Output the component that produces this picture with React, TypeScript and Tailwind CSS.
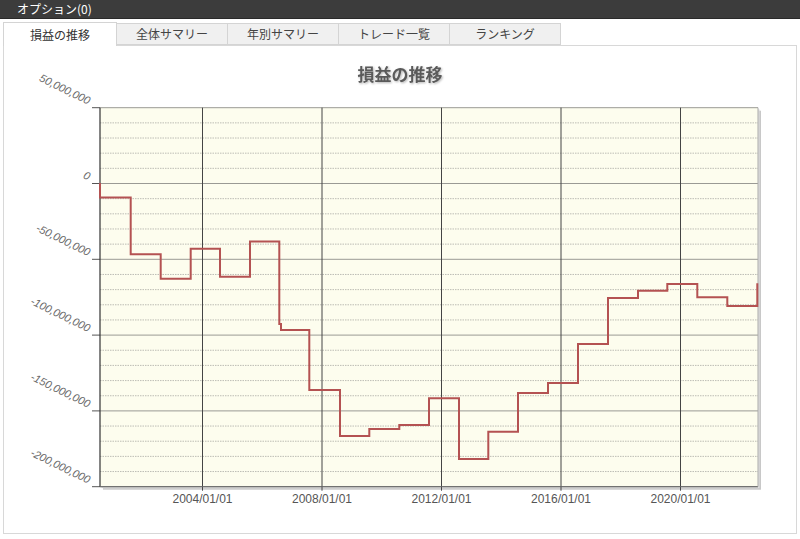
import React from "react";

const pts: [number, number][] = [
  [100, 183], [100, 197.5], [130.7, 197.5], [130.7, 254.3], [160.7, 254.3], [160.7, 278.7],
  [190.7, 278.7], [190.7, 248.7], [220, 248.7], [220, 276.7], [250, 276.7], [250, 241.5],
  [279.3, 241.5], [279.3, 324], [281, 324], [281, 330], [309.3, 330], [309.3, 390], [340, 390],
  [340, 436], [369.3, 436], [369.3, 429], [399.3, 429], [399.3, 425], [429, 425], [429, 398.3],
  [459, 398.3], [459, 459], [488.3, 459], [488.3, 431.7], [518, 431.7], [518, 393], [548, 393],
  [548, 383], [578, 383], [578, 344], [608, 344], [608, 298], [638, 298], [638, 290.7],
  [667.3, 290.7], [667.3, 284], [697.3, 284], [697.3, 297.3], [727.3, 297.3], [727.3, 306],
  [757.3, 306], [757.3, 283.3],
];

const L = 100;
const R = 758;
const T = 107.7;
const B = 486.7;
const major = 75.8;

function Chart() {
  const majors = [0, 1, 2, 3, 4, 5].map((i) => T + i * major);
  const minors: number[] = [];
  for (let i = 0; i < 5; i++) for (let j = 1; j < 5; j++) minors.push(T + i * major + (j * major) / 5);
  const labels = ["50,000,000", "0", "-50,000,000", "-100,000,000", "-150,000,000", "-200,000,000"];
  const years = [
    { x: 202.5, t: "2004/01/01" },
    { x: 322, t: "2008/01/01" },
    { x: 441.5, t: "2012/01/01" },
    { x: 561, t: "2016/01/01" },
    { x: 680.5, t: "2020/01/01" },
  ];
  return (
    <svg width="794" height="488" viewBox="0 0 794 488" className="block">
      <defs>
        <filter id="ts" x="-10%" y="-30%" width="120%" height="160%">
          <feDropShadow dx="1" dy="1" stdDeviation="0.8" floodColor="#000" floodOpacity="0.3" />
        </filter>
      </defs>
      <g transform="translate(-4,-46)">
        <text
          x="400"
          y="81"
          textAnchor="middle"
          fontSize="17"
          fontWeight="bold"
          fill="#5a5a5a"
          filter="url(#ts)"
          className="font-['Noto_Sans_CJK_JP',sans-serif]"
        >
          損益の推移
        </text>
        <rect x={L + 3} y={T + 3} width={R - L} height={B - T} fill="#c8c8c8" />
        <rect x={L + 1.5} y={T + 1.5} width={R - L} height={B - T} fill="#e0e0e0" />
        <rect x={L} y={T} width={R - L} height={B - T} fill="#fdfdee" />
        {minors.map((y, i) => (
          <line key={"m" + i} x1={L} x2={R} y1={y} y2={y} stroke="#bdbdb5" strokeWidth="1" strokeDasharray="1.5 1" />
        ))}
        {majors.map((y, i) => (
          <g key={"M" + i}>
            <line x1={L} x2={R} y1={y} y2={y} stroke="#9a9a94" strokeWidth="1" />
            <line x1={92} x2={L} y1={y} y2={y} stroke="#555" strokeWidth="1" />
          </g>
        ))}
        {years.map((yr) => (
          <g key={yr.t}>
            <line x1={yr.x} x2={yr.x} y1={T} y2={B + 4} stroke="#444" strokeWidth="1" />
            <text
              x={yr.x}
              y={B + 16}
              textAnchor="middle"
              fontSize="12"
              fill="#555"
              className="font-['Liberation_Sans',Arial,sans-serif]"
            >
              {yr.t}
            </text>
          </g>
        ))}
        <line x1={L} x2={L} y1={T} y2={B} stroke="#333" strokeWidth="1.2" />
        <line x1={L} x2={R} y1={B} y2={B} stroke="#666" strokeWidth="1" />
        <line x1={R} x2={R} y1={T} y2={B} stroke="#aaa" strokeWidth="1" />
        {majors.map((y, i) => (
          <text
            key={"l" + i}
            x={0}
            y={0}
            textAnchor="end"
            fontSize="11"
            fill="#6a6a6a"
            transform={`translate(88 ${y - 3}) rotate(26)`}
            className="italic font-['Liberation_Sans',Arial,sans-serif]"
          >
            {labels[i]}
          </text>
        ))}
        <polyline
          points={pts.map((p) => p.join(",")).join(" ")}
          fill="none"
          stroke="#b45252"
          strokeWidth="2"
          strokeLinejoin="miter"
        />
      </g>
    </svg>
  );
}

export default function App() {
  const tabs = ["損益の推移", "全体サマリー", "年別サマリー", "トレード一覧", "ランキング"];
  return (
    <div className="w-[800px] h-[539px] bg-white overflow-hidden flex flex-col font-['Noto_Sans_CJK_JP',sans-serif]">
      <div className="h-[19px] bg-[#3c3c3c] border-b border-[#2a2a2a] text-white text-[12px] leading-[18px] pl-[17px]">
        オプション(0)
      </div>
      <div className="flex pl-[3px] mt-[3px] h-[24px]">
        {tabs.map((t, i) => (
          <div
            key={t}
            className={
              i === 0
                ? "w-[114px] h-[24px] bg-white border border-b-0 border-[#d4d4d4] text-[12px] text-[#333] flex items-center justify-center relative z-10"
                : "w-[111px] h-[22px] mt-[1px] bg-[#f0f0f0] border border-l-0 border-[#d4d4d4] text-[12px] text-[#444] flex items-center justify-center"
            }
          >
            {t}
          </div>
        ))}
      </div>
      <div className="ml-[3px] w-[794px] h-[489px] border border-[#d8d8d8] -mt-[1px]">
        <Chart />
      </div>
    </div>
  );
}
